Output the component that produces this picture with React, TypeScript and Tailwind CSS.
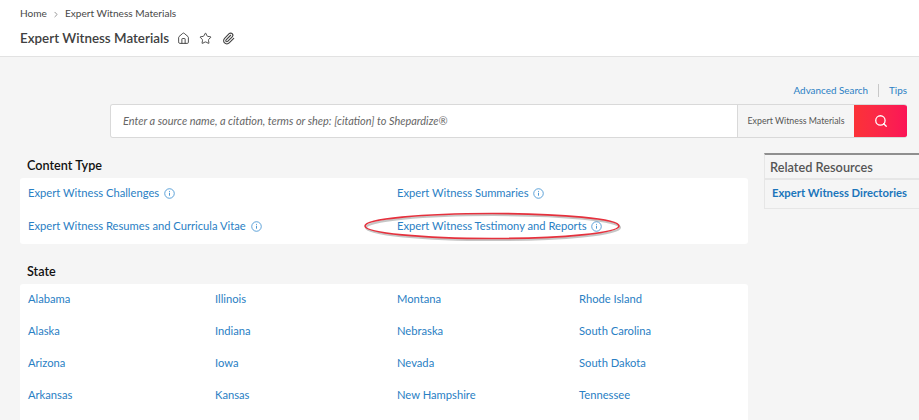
import { ChevronRight, Home, Paperclip, Search, Star } from "lucide-react";

function InfoIcon() {
  return (
    <svg viewBox="0 0 12 12" className="h-[11px] w-[11px] shrink-0 text-[#3d8fd1]" fill="none" stroke="currentColor">
      <circle cx="6" cy="6" r="5.2" strokeWidth="0.9" />
      <path d="M6 5.2v3.2M6 3.2v1" strokeWidth="1" />
    </svg>
  );
}

const states = [
  ["Alabama", "Illinois", "Montana", "Rhode Island"],
  ["Alaska", "Indiana", "Nebraska", "South Carolina"],
  ["Arizona", "Iowa", "Nevada", "South Dakota"],
  ["Arkansas", "Kansas", "New Hampshire", "Tennessee"],
];

export default function App() {
  return (
    <div className="h-[420px] w-[919px] overflow-hidden bg-[#f5f5f5] font-['Lato',sans-serif]">
      <header className="h-[57px] border-b border-[#e2e2e2] bg-white pl-5 pt-[7px]">
        <div className="flex h-[14px] items-center text-[10.1px] text-[#484848]">
          <span>Home</span>
          <ChevronRight className="mx-[4px] h-[9px] w-[10px]" strokeWidth={1.5} />
          <span>Expert Witness Materials</span>
        </div>
        <div className="mt-[7px] flex h-[20px] items-center text-[#404040]">
          <h1 className="text-[13.4px] font-semibold">Expert Witness Materials</h1>
          <Home className="ml-[8px] h-[13px] w-[13px]" strokeWidth={1.7} />
          <Star className="ml-[9px] h-[13px] w-[13px]" strokeWidth={1.7} />
          <Paperclip className="ml-[10px] h-[13px] w-[13px]" strokeWidth={2} />
        </div>
      </header>

      <main className="px-5 pt-[27px]">
        <div className="-mr-2 flex h-[13px] items-center justify-end text-[9.9px] text-[#2a80c4]">
          <span>Advanced Search</span>
          <span className="mx-[10px] h-[13px] w-px bg-[#c8c8c8]" />
          <span>Tips</span>
        </div>

        <div className="-mr-2 ml-[90px] mt-[7px] flex h-[34px] overflow-hidden rounded-[3px] border border-r-0 border-[#d9d9d9]">
          <div className="flex flex-1 items-center bg-white pl-3 text-[10.95px] italic text-[#666666]">
            Enter a source name, a citation, terms or shep: [citation] to Shepardize®
          </div>
          <div className="flex w-[117px] items-center justify-center border-l border-[#d9d9d9] text-[8.8px] text-[#555555]">
            Expert Witness Materials
          </div>
          <div className="flex w-[53px] items-center justify-center bg-gradient-to-r from-[#fb3237] to-[#fb1457]">
            <Search className="h-[14px] w-[14px] text-white" strokeWidth={2.2} />
          </div>
        </div>

        <div className="mt-[15px] flex">
          <div className="w-[728px]">
            <h2 className="ml-[7px] mt-[3px] h-[22px] text-[12.65px] font-semibold leading-[20px] text-[#111111]">
              Content Type
            </h2>
            <div className="relative h-[66px] rounded-[3px] bg-white text-[11.2px] text-[#2a80c4]">
              <div className="grid h-full grid-cols-[369px_1fr] grid-rows-[31px_35px] items-center pl-2">
                <div className="flex items-center gap-[5px]">
                  Expert Witness Challenges <InfoIcon />
                </div>
                <div className="flex items-center gap-[4px]">
                  Expert Witness Summaries <InfoIcon />
                </div>
                <div className="flex items-center gap-[5px]">
                  Expert Witness Resumes and Curricula Vitae <InfoIcon />
                </div>
                <div className="flex items-center gap-[4px]">
                  Expert Witness Testimony and Reports <InfoIcon />
                </div>
              </div>
              <svg className="absolute left-[344px] top-[33px] h-[32px] w-[260px]" viewBox="0 0 260 32" fill="none">
                <ellipse cx="129" cy="16.5" rx="127" ry="12.5" stroke="#808080" strokeOpacity="0.45" strokeWidth="2.2" />
                <ellipse cx="128" cy="15" rx="127" ry="12.5" stroke="#e5313d" strokeWidth="1.6" />
              </svg>
            </div>

            <h2 className="ml-[7px] mt-[18px] h-[22px] text-[12.65px] font-semibold leading-[20px] text-[#111111]">
              State
            </h2>
            <div className="rounded-[3px] bg-white pb-4 pl-2 text-[11.2px] text-[#2a80c4]">
              {states.map((row) => (
                <div key={row[0]} className="grid h-[31.7px] grid-cols-[187px_182px_182px_1fr] items-center">
                  {row.map((name) => (
                    <span key={name}>{name}</span>
                  ))}
                </div>
              ))}
            </div>
          </div>

          <aside className="-mr-5 ml-[16px] h-[56px] flex-1 border border-r-0 border-[#e6e6e6] border-t-2 border-t-[#8f8f8f] bg-[#f5f5f5]">
            <div className="flex h-[25px] items-center border-b-2 border-[#e6e6e6] pl-[5px] pt-[2px] text-[12.75px] font-semibold text-[#555555]">
              Related Resources
            </div>
            <div className="flex h-[27px] items-center pl-[7px] text-[11.25px] font-bold text-[#1b75bb]">
              Expert Witness Directories
            </div>
          </aside>
        </div>
      </main>
    </div>
  );
}
